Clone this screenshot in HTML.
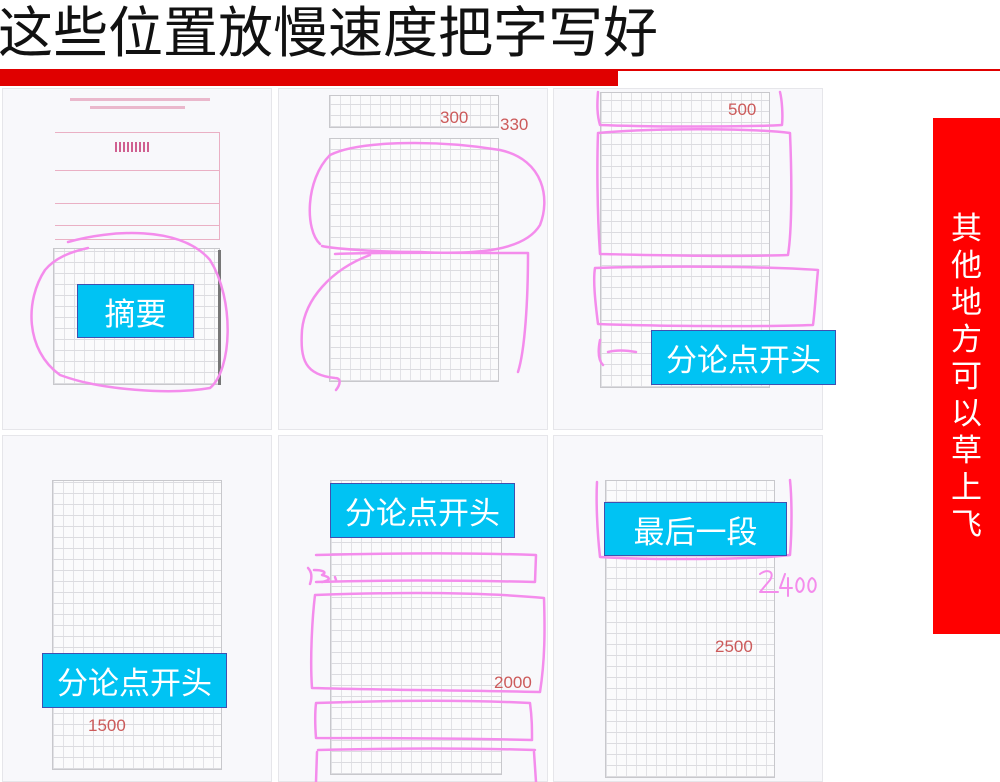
<!DOCTYPE html>
<html><head><meta charset="utf-8">
<style>
*{margin:0;padding:0;box-sizing:border-box}
body{width:1000px;height:782px;background:#fff;position:relative;overflow:hidden;font-family:"Liberation Sans","Noto Sans CJK SC",sans-serif}
.title{position:absolute;left:-2px;top:0px;font-size:55px;line-height:66px;color:#111}
.bar{position:absolute;left:0;top:70px;width:618px;height:16px;background:#e00000}
.line{position:absolute;left:0;top:69px;width:1000px;height:2px;background:#e00000}
.p{position:absolute;background:#f8f8fb;border:1px solid #e6e6ea}
.g{position:absolute;border:1px solid #c8c8cc;
background-image:repeating-linear-gradient(0deg,#dcdce0 0 1px,transparent 1px 11px),repeating-linear-gradient(90deg,#e2e2e6 0 1px,transparent 1px 10px);background-color:#fbfbfc}
.lab{position:absolute;background:#00c3f3;border:1px solid #4050b0;color:#fff;font-size:31px;display:flex;align-items:center;justify-content:center}
.n{position:absolute;color:#cc5a5a;font-size:16px}
.side{position:absolute;left:933px;top:118px;width:67px;height:516px;background:#ff0000;color:#fff;font-size:31px;line-height:37px;display:flex;flex-direction:column;align-items:center;justify-content:center;text-align:center}
</style></head><body>
<div class="title">这些位置放慢速度把字写好</div>
<div class="line"></div><div class="bar"></div>

<div class="p" style="left:2px;top:88px;width:270px;height:342px"></div>
<div class="p" style="left:278px;top:88px;width:270px;height:342px"></div>
<div class="p" style="left:553px;top:88px;width:270px;height:342px"></div>
<div class="p" style="left:2px;top:435px;width:270px;height:347px"></div>
<div class="p" style="left:278px;top:435px;width:270px;height:347px"></div>
<div class="p" style="left:553px;top:435px;width:270px;height:347px"></div>

<div style="position:absolute;left:70px;top:98px;width:140px;height:3px;background:#eab8cc"></div>
<div style="position:absolute;left:90px;top:106px;width:95px;height:3px;background:#eab8cc"></div>
<div style="position:absolute;left:55px;top:132px;width:165px;height:108px;border:1px solid #eab0c4;border-left:none"></div>
<div style="position:absolute;left:55px;top:170px;width:165px;height:1px;background:#eab0c4"></div>
<div style="position:absolute;left:55px;top:203px;width:165px;height:1px;background:#eab0c4"></div>
<div style="position:absolute;left:55px;top:225px;width:165px;height:1px;background:#eab0c4"></div>
<div style="position:absolute;left:115px;top:142px;width:35px;height:10px;background:repeating-linear-gradient(90deg,#d06090 0 2px,transparent 2px 4px)"></div>
<div class="g" style="left:53px;top:248px;width:167px;height:137px"></div>
<div style="position:absolute;left:218px;top:250px;width:3px;height:135px;background:#777"></div>

<div class="g" style="left:329px;top:95px;width:170px;height:33px"></div>
<div class="g" style="left:329px;top:138px;width:170px;height:244px"></div>
<div class="n" style="left:440px;top:108px;font-size:17px">300</div>
<div class="n" style="left:500px;top:115px;font-size:17px">330</div>

<div class="g" style="left:600px;top:92px;width:170px;height:296px"></div>
<div class="n" style="left:728px;top:100px;font-size:17px">500</div>

<div class="g" style="left:52px;top:480px;width:170px;height:290px"></div>
<div class="n" style="left:88px;top:716px;font-size:17px">1500</div>
<div class="g" style="left:330px;top:480px;width:172px;height:295px"></div>
<div class="n" style="left:494px;top:673px;font-size:17px">2000</div>
<div class="g" style="left:605px;top:480px;width:170px;height:298px"></div>
<div class="n" style="left:715px;top:637px;font-size:17px">2500</div>

<svg style="position:absolute;left:0;top:0" width="1000" height="782" fill="none" stroke="#f48cec" stroke-width="2.5" stroke-linecap="round" stroke-linejoin="round">
<path d="M68 242 C110 230 180 225 210 260 C235 300 232 370 210 388 C170 395 100 390 60 375 C25 350 25 300 45 270 C55 258 70 252 88 248"/>
<path d="M320 244 C305 230 305 180 330 155 C360 140 440 140 500 150 C545 160 550 200 540 225 C525 250 480 255 420 252 C370 252 330 248 322 246"/>
<path d="M335 254 C390 252 450 253 528 253 C528 300 525 350 518 372"/>
<path d="M370 255 C330 270 305 300 302 330 C300 360 305 375 335 378 C342 378 340 385 336 390"/>
<path d="M598 92 C597 105 597 115 600 125 C650 127 750 127 782 125 C783 115 782 100 780 92"/>
<path d="M598 133 C650 128 750 128 790 133 C792 180 792 230 788 255 C730 257 650 255 600 254 C597 210 597 160 598 133"/>
<path d="M595 268 C660 266 760 266 818 270 C816 290 815 310 813 325 C760 327 650 326 598 324 C595 300 593 280 595 268"/>
<path d="M600 340 C598 350 598 360 603 365 M608 352 C616 350 625 350 636 352"/>
<path d="M316 555 C400 553 480 553 536 555 L535 582 C450 580 380 580 316 582"/>
<path d="M315 595 C400 592 480 592 544 598 C545 630 545 660 540 692 C450 690 380 690 312 688 C310 660 312 620 315 595"/>
<path d="M316 703 C400 700 470 700 530 703 C532 718 532 728 532 740 C450 738 380 738 316 738 C315 725 315 712 316 703"/>
<path d="M318 750 C400 748 470 748 535 750 M317 752 L316 782 M534 752 L536 782"/>
<path d="M308 568 C312 572 312 578 310 584 M314 570 C322 570 328 572 322 575 C330 577 332 580 322 582 M335 577 L336 580"/>
<path d="M597 482 C596 500 597 530 600 557 C650 560 750 560 790 555 C792 530 792 500 790 480"/>
<path d="M760 574 C768 568 775 572 770 580 L760 592 L778 592 M785 574 L780 588 L792 588 M788 578 L788 596 M800 578 C795 580 795 592 800 592 C805 590 805 580 800 578 M812 578 C807 580 807 592 812 592 C817 590 817 580 812 578" stroke-width="2"/>
</svg>

<div class="lab" style="left:77px;top:284px;width:117px;height:54px">摘要</div>
<div class="lab" style="left:651px;top:330px;width:185px;height:55px">分论点开头</div>
<div class="lab" style="left:330px;top:483px;width:185px;height:55px">分论点开头</div>
<div class="lab" style="left:604px;top:502px;width:183px;height:54px">最后一段</div>
<div class="lab" style="left:42px;top:653px;width:185px;height:55px">分论点开头</div>

<div class="side"><div>其</div><div>他</div><div>地</div><div>方</div><div>可</div><div>以</div><div>草</div><div>上</div><div>飞</div></div>
</body></html>
